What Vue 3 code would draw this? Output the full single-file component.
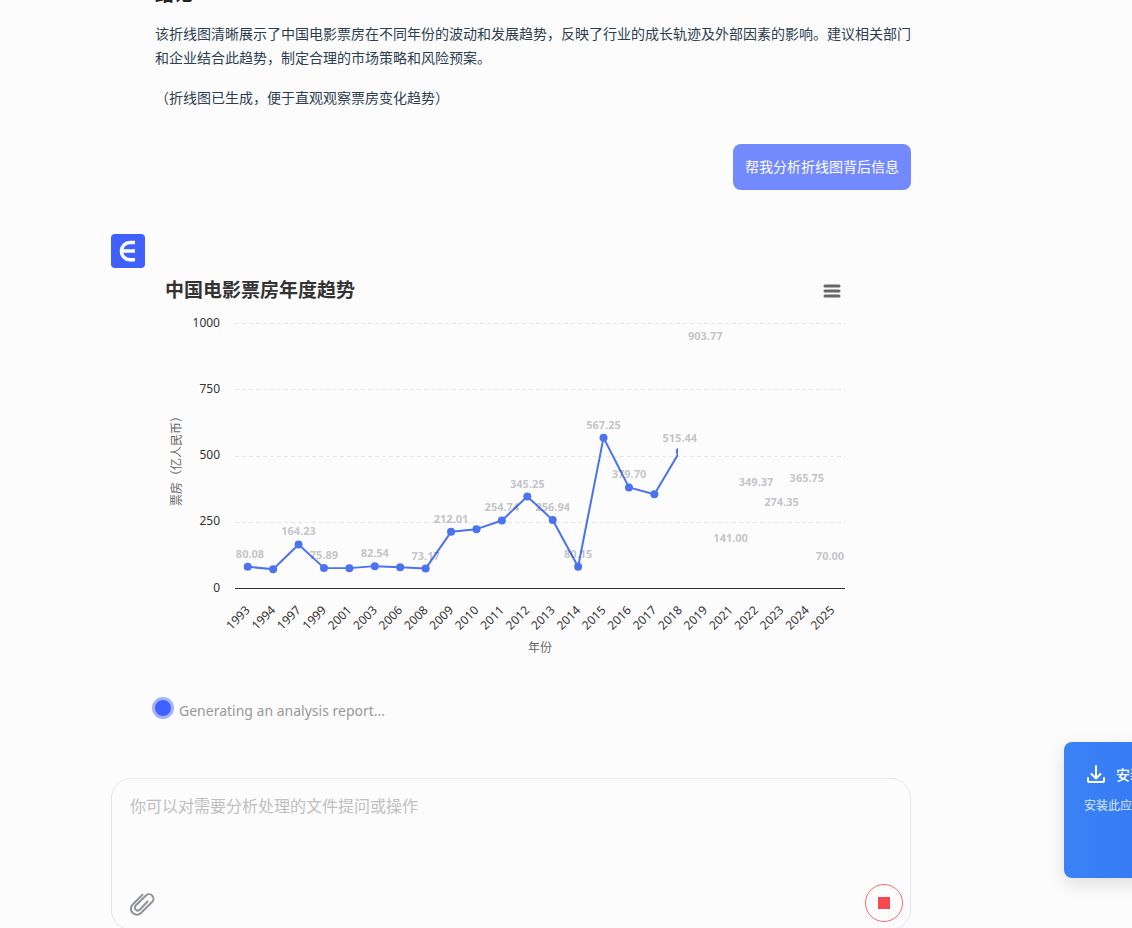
<script setup>
const points = [
  { year: '1993', value: 80.08, label: true },
  { year: '1994', value: 71 },
  { year: '1997', value: 164.23, label: true },
  { year: '1999', value: 75.89, label: true },
  { year: '2001', value: 75 },
  { year: '2003', value: 82.54, label: true },
  { year: '2006', value: 78 },
  { year: '2008', value: 73.17, label: true },
  { year: '2009', value: 212.01, label: true },
  { year: '2010', value: 222 },
  { year: '2011', value: 254.74, label: true },
  { year: '2012', value: 345.25, label: true },
  { year: '2013', value: 256.94, label: true },
  { year: '2014', value: 80.15, label: true },
  { year: '2015', value: 567.25, label: true },
  { year: '2016', value: 379.7, label: true },
  { year: '2017', value: 354 },
  { year: '2018', value: 515.44, label: true },
  { year: '2019', value: 903.77, label: true },
  { year: '2021', value: 141, label: true },
  { year: '2022', value: 349.37, label: true },
  { year: '2023', value: 274.35, label: true },
  { year: '2024', value: 365.75, label: true },
  { year: '2025', value: 70, label: true }
]

const plot = { left: 80, right: 690, top: 55, bottom: 320 }
const ticks = [0, 250, 500, 750, 1000]
const step = (plot.right - plot.left) / points.length
const revealed = 443

const yOf = (value) => plot.bottom - (value / 1000) * (plot.bottom - plot.top)
const marks = points.map((p, i) => ({
  ...p,
  x: plot.left + step * (i + 0.5),
  y: yOf(p.value)
}))
const linePath = marks.map((m) => `${m.x},${m.y}`).join(' ')
const labelX = (m) => Math.max(plot.left + 15, Math.min(m.x, plot.right - 15))
</script>

<template>
  <div class="page">
    <main class="chat">
      <article class="answer">
        <h3>结论</h3>
        <p>该折线图清晰展示了中国电影票房在不同年份的波动和发展趋势，反映了行业的成长轨迹及外部因素的影响。建议相关部门和企业结合此趋势，制定合理的市场策略和风险预案。</p>
        <p>（折线图已生成，便于直观观察票房变化趋势）</p>
      </article>

      <div class="question">帮我分析折线图背后信息</div>

      <svg class="avatar" viewBox="0 0 34 34" aria-hidden="true">
        <rect width="34" height="34" rx="4" fill="#4161ff" />
        <path d="M24 8.500H19A8.600 8.600 0 0 0 19 25.700H24M10 17H24" fill="none" stroke="#fff" stroke-width="3.400" />
      </svg>

      <section class="report">
        <div class="chart-head">
          <h2>中国电影票房年度趋势</h2>
          <button class="menu" type="button" aria-label="菜单">
            <svg width="18" height="14" viewBox="0 0 18 14">
              <path d="M2 2H16M2 7H16M2 12H16" stroke="#666" stroke-width="3" stroke-linecap="round" />
            </svg>
          </button>
        </div>
        <svg class="chart" viewBox="0 40 700 360" role="img" aria-label="中国电影票房年度趋势">
          <defs>
            <clipPath id="reveal">
              <rect x="80" y="40" :width="revealed" height="300" />
            </clipPath>
          </defs>
          <g v-for="t in ticks" :key="t">
            <line
              v-if="t"
              class="grid"
              :x1="plot.left"
              :x2="plot.right"
              :y1="Math.round(yOf(t)) + 0.5"
              :y2="Math.round(yOf(t)) + 0.5"
            />
            <text class="tick" x="65" :y="Math.floor(yOf(t)) + 4" text-anchor="end">{{ t }}</text>
          </g>
          <line class="axis" :x1="plot.left" :x2="plot.right" y1="320.5" y2="320.5" />
          <g clip-path="url(#reveal)">
            <polyline class="series" :points="linePath" />
            <circle v-for="m in marks" :key="m.year" class="dot" :cx="m.x" :cy="m.y" r="4" />
          </g>
          <g v-for="m in marks" :key="m.year">
            <text v-if="m.label" class="value" :x="labelX(m)" :y="m.y - 9" text-anchor="middle">{{ m.value.toFixed(2) }}</text>
            <text class="tick" text-anchor="end" :transform="`translate(${m.x + 3} 343) rotate(-45)`">{{ m.year }}</text>
          </g>
          <text class="name" text-anchor="middle" transform="translate(26 190) rotate(-90)">票房（亿人民币）</text>
          <text class="name" x="385" y="384" text-anchor="middle">年份</text>
        </svg>
        <div class="status" role="status"><span class="pulse"></span>Generating an analysis report...</div>
      </section>

      <form class="composer" @submit.prevent>
        <textarea aria-label="提问" placeholder="你可以对需要分析处理的文件提问或操作"></textarea>
        <div class="tools">
          <button class="attach" type="button" aria-label="附件">
            <svg width="26" height="24" viewBox="0 0 26 24" fill="none" stroke="#909399" stroke-width="2" stroke-linecap="round" stroke-linejoin="round">
              <path d="M12.500 1.800L2.700 11.500A5.900 5.900 0 0 0 11 20L22 9A4.400 4.400 0 0 0 16 2.500L5.700 12.500A2.900 2.900 0 0 0 10 16.500L17.500 8.500" />
            </svg>
          </button>
          <button class="stop" type="button" aria-label="停止"><span></span></button>
        </div>
      </form>
    </main>

    <aside class="install">
      <div class="install-title">
        <svg width="20" height="20" viewBox="0 0 20 20" fill="none" stroke="#fff" stroke-width="2" stroke-linecap="round" stroke-linejoin="round">
          <path d="M10 2V14M5.500 10L10 14.500L14.500 10M2 14V16.500Q2 18 3.500 18H16.500Q18 18 18 16.500V14" />
        </svg>
        <strong>安装</strong>
      </div>
      <p>安装此应</p>
    </aside>
  </div>
</template>

<style>
body {
  background: #fcfcfc;
  overflow: hidden;
}
</style>

<style scoped>
.page {
  position: relative;
  box-sizing: border-box;
  height: 100vh;
  overflow: hidden;
  padding: 0 111px;
  background: #fcfcfc;
  color: #2c3e50;
  font-family: "Noto Sans", "Noto Sans CJK SC", sans-serif;
  font-size: 14px;
  line-height: 24px;
}
.chat {
  display: flex;
  flex-direction: column;
  max-width: 800px;
}
.answer {
  margin-left: 44px;
  font-family: "Noto Sans CJK SC", sans-serif;
}
.answer h3 {
  margin: -19px 0 16px;
  color: #222;
  font-size: 19px;
  line-height: 24px;
}
.answer p {
  margin: 0 0 16px;
}
.question {
  align-self: flex-end;
  margin-top: 19px;
  padding: 10px 12px 12px;
  border-radius: 8px;
  background: #738aff;
  color: #fff;
  font-family: "Noto Sans CJK SC", sans-serif;
}
.avatar {
  width: 34px;
  height: 34px;
  margin-top: 44px;
}
.report {
  max-width: 700px;
  margin-left: 44px;
}
.chart-head {
  display: flex;
  align-items: center;
  justify-content: space-between;
  height: 36px;
  padding: 4px 14px 0 10px;
}
.chart-head h2 {
  margin: 0;
  color: #333;
  font-size: 19px;
  line-height: 28px;
}
button {
  padding: 0;
  border: 0;
  background: none;
  cursor: pointer;
}
button svg {
  display: block;
}
.menu {
  padding-top: 2px;
}
.chart {
  display: block;
  width: 100%;
}
.grid {
  stroke: #e6e6e6;
  stroke-dasharray: 4 3;
}
.axis {
  stroke: #333;
}
.tick {
  fill: #333;
  font-size: 12px;
}
.name {
  fill: #666;
  font-size: 12px;
}
.series {
  fill: none;
  stroke: #4b73f0;
  stroke-width: 2;
  stroke-linejoin: round;
}
.dot {
  fill: #4b73f0;
}
.value {
  fill: #333346;
  fill-opacity: 0.3;
  font-size: 11px;
  font-weight: 700;
}
.status {
  display: flex;
  align-items: flex-start;
  gap: 5px;
  margin: 29px 0 0 -3px;
  color: #999;
  font-size: 14px;
  line-height: 28px;
}
.pulse {
  box-sizing: border-box;
  width: 22px;
  height: 22px;
  border: 3px solid #a3b3fa;
  border-radius: 50%;
  background: #4161ff;
}
.composer {
  box-sizing: border-box;
  margin-top: 53px;
  padding: 14px 7px 7px 18px;
  border: 1px solid #e4e5ee;
  border-radius: 20px;
}
textarea {
  display: block;
  box-sizing: border-box;
  width: 100%;
  height: 91px;
  padding: 0;
  border: 0;
  outline: 0;
  resize: none;
  background: none;
  color: #333;
  font-family: "Noto Sans CJK SC", sans-serif;
  font-size: 16px;
  line-height: 24px;
}
textarea::placeholder {
  color: #bfbfbf;
}
.tools {
  display: flex;
  align-items: center;
  justify-content: space-between;
}
.attach {
  padding-top: 4px;
}
.stop {
  display: grid;
  place-items: center;
  width: 38px;
  height: 38px;
  border: 1px solid #f56c6c;
  border-radius: 50%;
}
.stop span {
  width: 12px;
  height: 12px;
  background: #f54a4f;
}
.install {
  position: absolute;
  top: 742px;
  left: calc(100% - 68px);
  box-sizing: border-box;
  width: 300px;
  height: 136px;
  padding: 20px;
  border-radius: 8px;
  background: linear-gradient(90deg, #3b82f6, #2563eb);
  box-shadow: 0 6px 18px rgba(0, 0, 0, 0.12);
  color: #fff;
  font-family: "Noto Sans CJK SC", sans-serif;
}
.install-title {
  display: flex;
  align-items: center;
  gap: 10px;
  padding-left: 2px;
}
.install-title strong {
  font-weight: 500;
}
.install p {
  margin: 8px 0 0;
  color: #dbe8ff;
  font-size: 12px;
  line-height: 22px;
}
</style>
